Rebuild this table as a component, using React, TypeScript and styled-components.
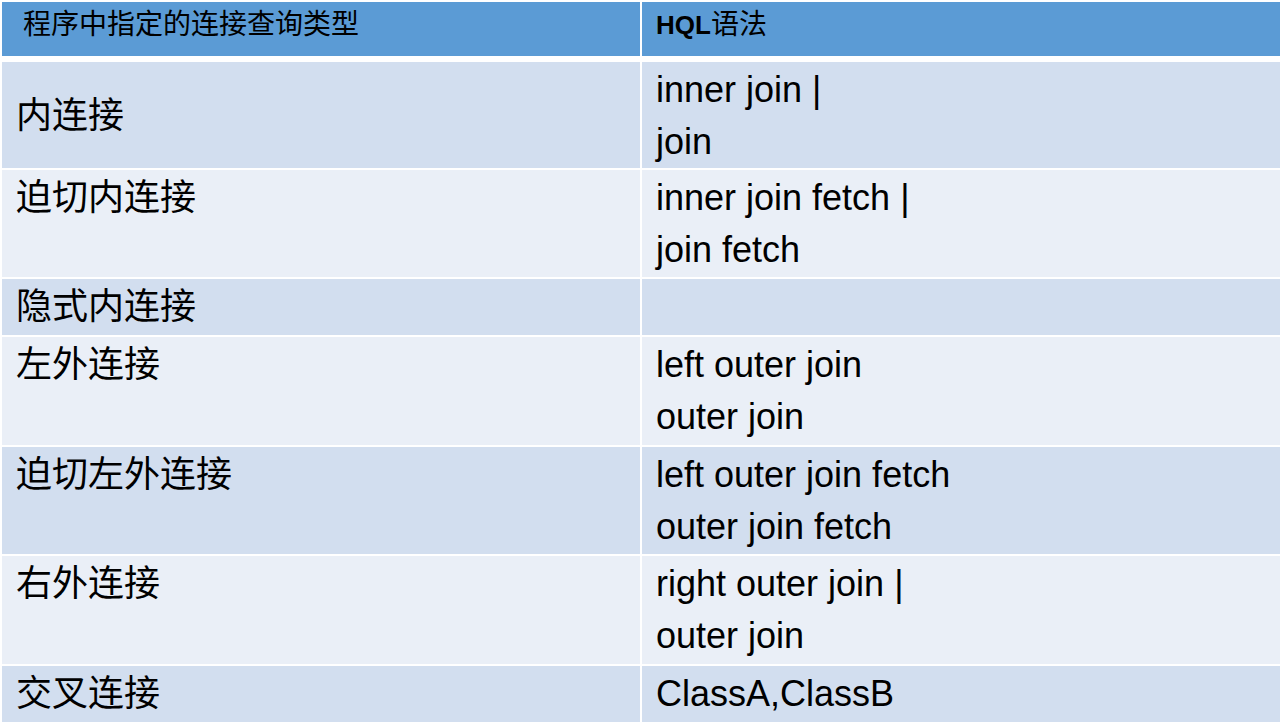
import React from "react";
import styled, { createGlobalStyle } from "styled-components";

type JoinRow = {
    kind: string;
    hql: string[];
    height: number;
    middle?: boolean;
};

const rows: JoinRow[] = [
    { kind: "内连接", hql: ["inner join |", "join"], height: 106, middle: true },
    { kind: "迫切内连接", hql: ["inner join fetch |", "join fetch"], height: 107 },
    { kind: "隐式内连接", hql: [], height: 56 },
    { kind: "左外连接", hql: ["left outer join", "outer join"], height: 108 },
    { kind: "迫切左外连接", hql: ["left outer join fetch", "outer join fetch"], height: 107 },
    { kind: "右外连接", hql: ["right outer join |", "outer join"], height: 108 },
    { kind: "交叉连接", hql: ["ClassA,ClassB"], height: 56 },
];

function App() {
    return (
        <>
            <GlobalStyle />
            <Page>
                <Table>
                    <HeadRow>
                        <HeadCell>程序中指定的连接查询类型</HeadCell>
                        <HeadCell>
                            <Strong>HQL</Strong>语法
                        </HeadCell>
                    </HeadRow>
                    {rows.map((row, i) => (
                        <BodyRow key={row.kind} $odd={i % 2 === 0} $h={row.height}>
                            <Cell $middle={row.middle}>{row.kind}</Cell>
                            <Cell>
                                {row.hql.map((line) => (
                                    <Line key={line}>{line}</Line>
                                ))}
                            </Cell>
                        </BodyRow>
                    ))}
                </Table>
            </Page>
        </>
    );
}

const GlobalStyle = createGlobalStyle`
    html, body {
        margin: 0;
        padding: 0;
        background: #ffffff;
    }
    body {
        font-family: "Liberation Sans", "Noto Sans CJK SC", sans-serif;
        color: #000000;
    }
`;

const Page = styled.div`
    width: 1282px;
    height: 725px;
    padding: 2px;
    box-sizing: border-box;
    background: #ffffff;
`;

const Table = styled.div`
    width: 1278px;
    display: flex;
    flex-direction: column;
    gap: 2px;
`;

const HeadRow = styled.div`
    display: grid;
    grid-template-columns: 638px 638px;
    column-gap: 2px;
    height: 54px;
    margin-bottom: 4px;
`;

const HeadCell = styled.div`
    background: #5b9bd5;
    padding: 5px 16px 0 21px;
    font-size: 28px;
    line-height: 36px;
    &:last-child {
        padding-left: 14px;
    }
`;

const Strong = styled.span`
    font-weight: 700;
    font-size: 26px;
`;

const BodyRow = styled.div<{ $odd: boolean; $h: number }>`
    display: grid;
    grid-template-columns: 638px 638px;
    column-gap: 2px;
    height: ${(p) => p.$h}px;
    & > div {
        background: ${(p) => (p.$odd ? "#d2deef" : "#eaeff7")};
    }
`;

const Cell = styled.div<{ $middle?: boolean }>`
    display: flex;
    flex-direction: column;
    justify-content: ${(p) => (p.$middle ? "center" : "flex-start")};
    padding: 2px 14px 0 14px;
    font-size: 36px;
    line-height: 52px;
    white-space: nowrap;
`;

const Line = styled.div``;

export default App;
